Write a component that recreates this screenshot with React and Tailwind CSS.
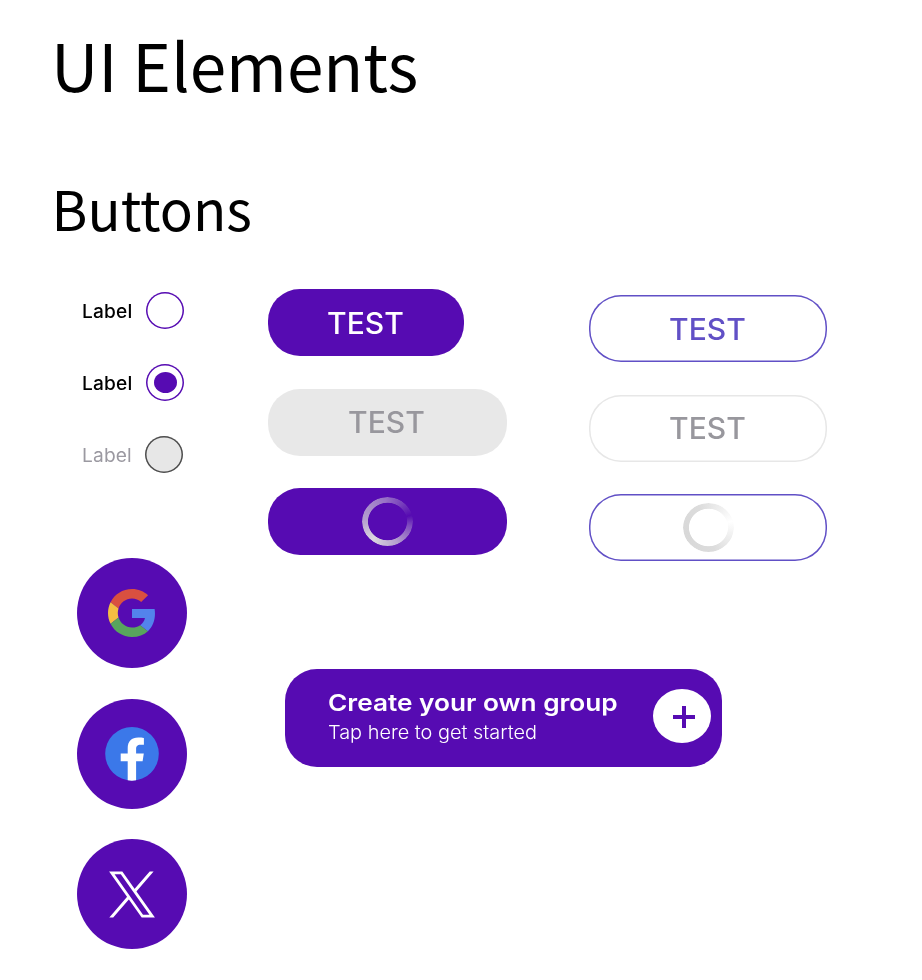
import React from "react";

const SANS = "font-['Inter','Liberation_Sans',sans-serif]";

function Radio({ checked, disabled }) {
  return (
    <div className="flex h-[37px] items-center">
      <span
        className={`w-[50px] origin-left scale-x-[1.035] whitespace-nowrap pt-[2px] text-[18.5px] leading-none tracking-[0.15px] ${
          disabled ? "font-normal text-[#9b99a1]" : "font-medium text-black"
        }`}
      >
        Label
      </span>
      <span
        className={`flex h-[37px] w-[38px] items-center justify-center rounded-[50%] ${
          disabled
            ? "ml-[12.5px] bg-[#e7e7e7] shadow-[inset_0_0_0_1.5px_#4d4d4d]"
            : "ml-[14px] shadow-[inset_0_0_0_1.5px_#560bb2]"
        }`}
      >
        {checked && <span className="h-[21px] w-[23px] rounded-[50%] bg-[#560bb2]" />}
      </span>
    </div>
  );
}

function PillButton({ className, children }) {
  return (
    <button
      className={`flex h-[67px] items-center justify-center rounded-[32px] text-[29.3px] leading-none font-medium ${className}`}
    >
      {children}
    </button>
  );
}

function Caption() {
  return <span className="inline-block scale-x-[1.025] pr-px pt-[1px]">TEST</span>;
}

const RING =
  "h-[49px] w-[51px] rounded-[50%] [mask-image:radial-gradient(closest-side,transparent_75%,#000_78%)]";

function GoogleIcon() {
  return (
    <svg className="mr-px" width="47" height="48" viewBox="0 0 47 48">
      <path fill="#d95040" d="M24 9.5c3.54 0 6.71 1.22 9.21 3.6l6.85-6.85C35.9 2.38 30.47 0 24 0 14.62 0 6.51 5.38 2.56 13.22l7.98 6.19C12.43 13.72 17.74 9.5 24 9.5z" />
      <path fill="#5383ec" d="M46.98 24.55c0-1.57-.15-3.09-.38-4.55H24v9.02h12.94c-.58 2.96-2.26 5.48-4.78 7.18l7.73 6c4.51-4.18 7.09-10.36 7.09-17.65z" />
      <path fill="#f3bd42" d="M10.53 28.59c-.48-1.45-.76-2.99-.76-4.59s.27-3.14.76-4.59l-7.98-6.19C.92 16.46 0 20.12 0 24c0 3.88.92 7.54 2.56 10.78l7.97-6.19z" />
      <path fill="#58a55d" d="M24 48c6.48 0 11.93-2.13 15.89-5.81l-7.73-6c-2.15 1.45-4.92 2.3-8.16 2.3-6.26 0-11.57-4.22-13.47-9.91l-7.98 6.19C6.51 42.62 14.62 48 24 48z" />
    </svg>
  );
}

function FacebookIcon() {
  return (
    <svg width="54" height="54" viewBox="0 0 54 54">
      <circle cx="27" cy="26.8" r="26.8" fill="#3b78e9" />
      <path fill="#fff" d="M22.7 53.3V34.300h-7v-7.8h7v-5.4c0-7 4-10.6 10.5-10.6 2.1 0 4 .1 5.7.4v6.8h-3.400c-3.300 0-4.400 1.800-4.400 4.300v4.500h7.700l-1.200 7.800h-6.500v19c-2.700.5-5.700.5-8.400 0z" />
    </svg>
  );
}

function XIcon() {
  return (
    <svg width="46" height="47" viewBox="0 0 46 47">
      <path fill="none" stroke="#fff" strokeWidth="2.8" d="M2.8 1.9h9.8l30.6 43.300h-9.800z" />
      <path fill="#fff" d="M40.700.5h3.900L26.700 21.200l-1.900-2.500zM.3 46.600h3.900L21.100 26.900l-1.900-2.500z" />
    </svg>
  );
}

function SocialButton({ children }) {
  return (
    <button className="flex h-[110px] w-[110px] items-center justify-center rounded-full bg-[#560bb2]">
      {children}
    </button>
  );
}

export default function App() {
  return (
    <main className={`h-[980px] w-[922px] overflow-hidden bg-white ${SANS}`}>
      <header className="h-[289px] pl-[51px] pt-[14px] font-['Noto_Sans_CJK_JP','Noto_Sans_CJK_SC',sans-serif] text-black">
        <h1 className="h-[100px] whitespace-nowrap text-[65.7px] leading-[100px]">UI Elements</h1>
        <h2 className="mt-[52px] h-[84px] whitespace-nowrap pl-[0.5px] text-[54.7px] leading-[84px]">Buttons</h2>
      </header>

      <div className="flex pl-[77px]">
        <div className="w-[110px] pt-[3px]">
          <div className="flex flex-col gap-[35px] pl-[5px]">
            <Radio />
            <Radio checked />
            <Radio disabled />
          </div>
          <div className="mt-[85px] flex flex-col gap-[30.5px]">
            <SocialButton><GoogleIcon /></SocialButton>
            <SocialButton><FacebookIcon /></SocialButton>
            <SocialButton><XIcon /></SocialButton>
          </div>
        </div>

        <div className="ml-[81px]">
          <div className="flex gap-[82.5px]">
            <div className="flex w-[238.5px] flex-col gap-[32.3px] pt-[0.4px]">
              <PillButton className="w-[195.5px] bg-[#560bb2] text-white"><Caption /></PillButton>
              <PillButton className="bg-[#e8e8e8] text-[#98979d]"><Caption /></PillButton>
              <PillButton className="bg-[#560bb2]">
                <span className={`${RING} bg-[conic-gradient(from_75deg,#d9d9d900,#d9d9d950_25deg,#d9d9d9b8_80deg,#e2e2e2f2_145deg,#d9d9d9b8_200deg,#d9d9d980_280deg,#d9d9d940_325deg,#d9d9d900)]`} />
              </PillButton>
            </div>
            <div className="flex w-[238px] flex-col gap-[32.3px] pt-[6.3px]">
              <PillButton className="text-[#6150c6] shadow-[inset_0_0_0_1.5px_#6150c6]"><Caption /></PillButton>
              <PillButton className="text-[#98979d] shadow-[inset_0_0_0_1.5px_#e7e7e7]"><Caption /></PillButton>
              <PillButton className="shadow-[inset_0_0_0_1.5px_#6150c6]">
                <span className={`${RING} bg-[conic-gradient(from_75deg,#fff,#f2f2f2_30deg,#dcdcdc_90deg,#d8d8d8_180deg,#dcdcdc_260deg,#eeeeee_315deg,#fff)]`} />
              </PillButton>
            </div>
          </div>

          <section className="ml-[17px] mt-[108.3px] flex h-[98px] w-[437px] rounded-[32px] bg-[#560bb2] pl-[42.5px] text-white">
            <div className="w-[325.5px] whitespace-nowrap pt-[19px]">
              <h3 className="w-fit origin-left scale-x-[1.115] text-[23.5px] leading-[30px] font-semibold">Create your own group</h3>
              <p className="w-fit origin-left scale-x-[1.075] text-[18.5px] leading-[28px] font-light">Tap here to get started</p>
            </div>
            <button className="mt-[20px] flex h-[54px] w-[58px] items-center justify-center rounded-[50%] bg-white">
              <svg className="ml-[4px] mt-px" width="22" height="22" viewBox="0 0 22 22" fill="none" stroke="#560bb2" strokeWidth="4">
                <path d="M0 11h22M11 0v22" />
              </svg>
            </button>
          </section>
        </div>
      </div>
    </main>
  );
}
